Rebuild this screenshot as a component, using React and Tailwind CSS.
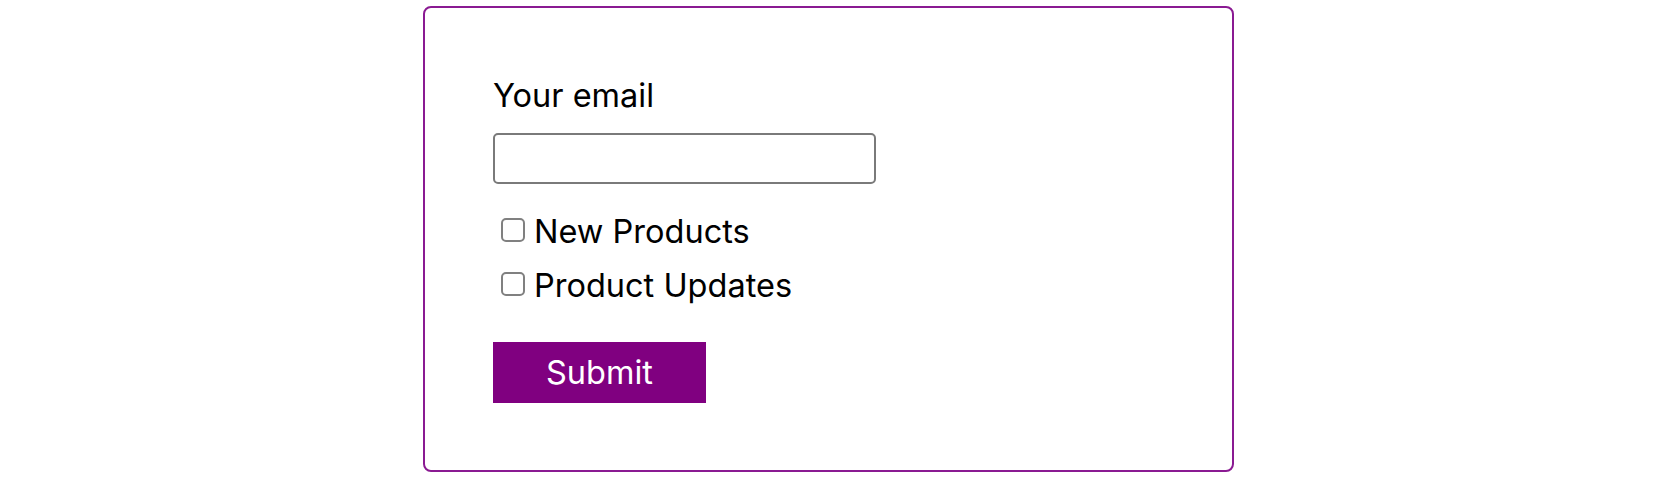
import { useState } from "react";

const topics = ["New Products", "Product Updates"];

const App = () => {
  const [email, setEmail] = useState("");
  const [checked, setChecked] = useState({});

  const toggle = (name) => {
    setChecked((prev) => ({ ...prev, [name]: !prev[name] }));
  };

  return (
    <div
      className="min-h-[486px] bg-white pt-[6px] text-black"
      style={{ fontFamily: "Inter, 'Noto Sans', sans-serif" }}
    >
      {/* Card */}
      <form
        onSubmit={(e) => e.preventDefault()}
        className="ml-[423px] w-[811px] h-[466px] border-2 border-[#8a1a92] rounded-[8px] pl-[68px] pt-[68px]"
      >
        <label htmlFor="email" className="block text-[32.5px] leading-[40px]">
          Your email
        </label>
        <input
          id="email"
          type="email"
          value={email}
          onChange={(e) => setEmail(e.target.value)}
          className="mt-[17px] block w-[383px] h-[51px] border-2 border-[#7a7a7a] rounded-[5px] px-3 text-[28px] outline-none"
        />

        {/* Topics */}
        <div className="mt-[28px] flex flex-col gap-[14px]">
          {topics.map((topic) => (
            <label
              key={topic}
              className="flex items-center h-[40px] text-[32.5px] leading-[40px]"
            >
              <input
                type="checkbox"
                checked={!!checked[topic]}
                onChange={() => toggle(topic)}
                className="appearance-none ml-[8px] mr-[9px] -mt-[4px] w-[24px] h-[24px] border-2 border-[#808080] rounded-[5px] bg-white checked:bg-[#800080]"
              />
              {topic}
            </label>
          ))}
        </div>

        <button
          type="submit"
          className="mt-[36px] w-[213px] h-[61px] bg-[#800080] text-white text-[32.5px] leading-[40px]"
        >
          Submit
        </button>
      </form>
    </div>
  );
};

export default App;
